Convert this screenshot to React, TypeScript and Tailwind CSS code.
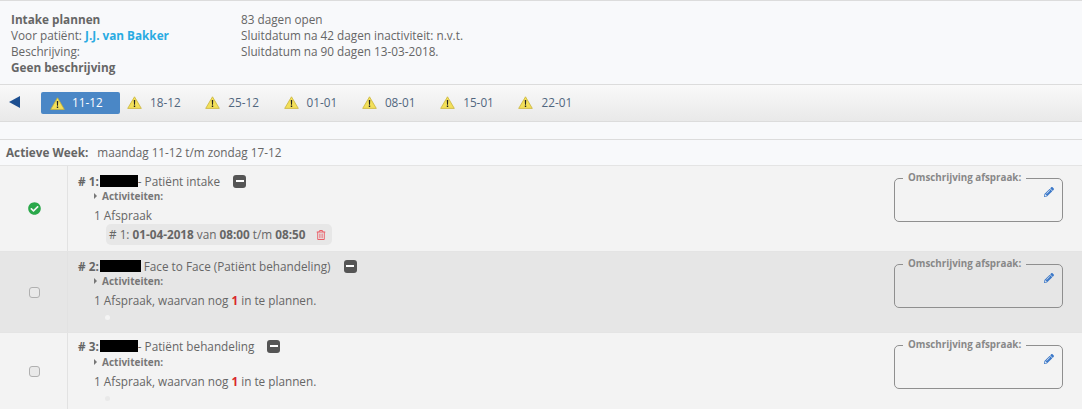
import React from "react";
import { FaCheckCircle, FaRegTrashAlt, FaPencilAlt } from "react-icons/fa";

function Warn() {
  return (
    <svg width="15" height="13" viewBox="0 0 15 13" className="shrink-0">
      <path d="M7.5 .8 14.3 12.4H.7Z" fill="#f3e05a" stroke="#c9b43a" strokeWidth="0.8" strokeLinejoin="round" />
      <path d="M6.8 4h1.4l-.2 4.7H7zM6.8 9.4h1.4v1.5H6.8z" fill="#222" />
    </svg>
  );
}

function Minus() {
  return (
    <span className="flex h-[13px] w-[13px] items-center justify-center rounded-[3px] bg-[#555]">
      <span className="h-[2px] w-[8px] bg-white" />
    </span>
  );
}

function Omschrijving() {
  return (
    <fieldset className="relative h-[51px] w-[169px] rounded-[5px] border border-[#8f8f8f] pl-[8px]">
      <legend className="px-[5px] text-[9.8px] leading-[14px] font-bold text-[#888]">Omschrijving afspraak:</legend>
      <FaPencilAlt className="absolute top-[2px] right-[8px] text-[10px] text-[#3b78c9]" />
    </fieldset>
  );
}

function Row({ bg, h, mark, num, black, title, top, sub, children }: { bg: string; h: string; mark: React.ReactNode; num: number; black: string; title: string; top: string; sub: string; children: React.ReactNode }) {
  return (
    <div className={`flex border-b border-[#e4e4e4] ${bg} ${h}`}>
      <div className="flex w-[68px] shrink-0 items-center justify-center border-r border-[#e2e2e2] pl-[1px]">{mark}</div>
      <div className={`flex-1 pl-[10px] ${top}`}>
        <div className="flex h-[14px] items-center leading-[14px]">
          <b className="text-[11.76px] text-[#666]">#&nbsp;{num}:</b>
          <span className={`h-[12px] bg-black ${black}`} />
          <span>{title}</span>
          <span className="ml-[13px]"><Minus /></span>
        </div>
        <div className={`ml-[16px] flex h-[12px] items-center gap-[5px] text-[10px] font-bold text-[#777] ${sub}`}>
          <span className="h-0 w-0 border-y-[3px] border-l-[3px] border-y-transparent border-l-[#777]" />
          Activiteiten:
        </div>
        {children}
      </div>
      <div className="w-[188px] shrink-0 pt-[5px]"><Omschrijving /></div>
    </div>
  );
}

function Plan({ dot }: { dot: string }) {
  return (
    <>
      <div className="mt-[5px] ml-[16px] h-[16px] leading-[16px]">
        1 Afspraak, waarvan nog <b className="text-[#d9262c]">1</b> in te plannen.
      </div>
      <div className={`mt-[7px] ml-[27px] h-[5px] w-[5px] rounded-full ${dot}`} />
    </>
  );
}

function Box() {
  return <span className="h-[11px] w-[11px] rounded-[3px] border border-[#b0b0b0] bg-[#e9e9e9]" />;
}

const weeks = ["18-12", "25-12", "01-01", "08-01", "15-01", "22-01"];

export default function App() {
  return (
    <div className="h-[409px] w-[1082px] overflow-hidden bg-[#f8f9fb] font-['Open_Sans',sans-serif] text-[11.76px] text-[#666]">
      <div className="flex h-[85px] border-y border-[#dcdcdc] pt-[10px] pl-[11px] leading-[16px]">
        <div className="w-[230px]">
          <div className="font-bold">Intake plannen</div>
          <div>Voor patiënt: <b className="text-[#29abe2]">J.J. van Bakker</b></div>
          <div>Beschrijving:</div>
          <div className="font-bold">Geen beschrijving</div>
        </div>
        <div>
          <div>83 dagen open</div>
          <div>Sluitdatum na 42 dagen inactiviteit: n.v.t.</div>
          <div>Sluitdatum na 90 dagen 13-03-2018.</div>
        </div>
      </div>
      <div className="flex h-[37px] items-center border-b border-[#dcdcdc] bg-gradient-to-b from-[#f9f9f9] to-[#e9e9e9] pl-[9px] text-[#51667e]">
        <span className="mt-[-3px] h-0 w-0 border-y-[6px] border-r-[11px] border-y-transparent border-r-[#1d4f91]" />
        <div className="ml-[21px] flex h-[22px] w-[79px] items-center gap-[7px] rounded-[2px] bg-[#4a87c6] pl-[9px] text-white">
          <Warn />11-12
        </div>
        <div className="ml-[7px] flex">
          {weeks.map((w) => (
            <div key={w} className="flex w-[78.3px] items-center gap-[8px]"><Warn />{w}</div>
          ))}
        </div>
      </div>
      <div className="h-[18px] border-b border-[#dcdcdc]" />
      <div className="flex h-[26px] items-center gap-[9px] border-b border-[#e4e4e4] pl-[6px]">
        <b>Actieve Week:</b><span>maandag 11-12 t/m zondag 17-12</span>
      </div>
      <Row bg="bg-[#f3f3f3]" h="h-[86px]" top="pt-[8px]" sub="mt-[2px]" num={1} black="ml-[1px] w-[38px]" title="- Patiënt intake" mark={<FaCheckCircle className="text-[13px] text-[#2aa84a]" />}>
        <div className="mt-[5px] ml-[16px] h-[16px] leading-[16px]">1 Afspraak</div>
        <div className="mt-[1px] ml-[28px] flex h-[21px] w-[226px] items-center rounded-[5px] bg-[#e7e7e7] pl-[3px]">
          <span># 1: <b>01-04-2018</b> van <b>08:00</b> t/m <b>08:50</b></span>
          <FaRegTrashAlt className="ml-[11px] text-[10px] text-[#ea5f68]" />
        </div>
      </Row>
      <Row bg="bg-[#e6e6e6]" h="h-[81px]" top="pt-[7px]" sub="mt-[2px]" num={2} black="ml-[1px] mr-[3px] w-[41px]" title="Face to Face (Patiënt behandeling)" mark={<Box />}>
        <Plan dot="bg-[#f4f4f4]" />
      </Row>
      <Row bg="bg-[#f3f3f3]" h="h-[77px]" top="pt-[6px]" sub="mt-[3px]" num={3} black="ml-[1px] w-[38px]" title="- Patiënt behandeling" mark={<Box />}>
        <Plan dot="bg-[#e9e9e9]" />
      </Row>
    </div>
  );
}
